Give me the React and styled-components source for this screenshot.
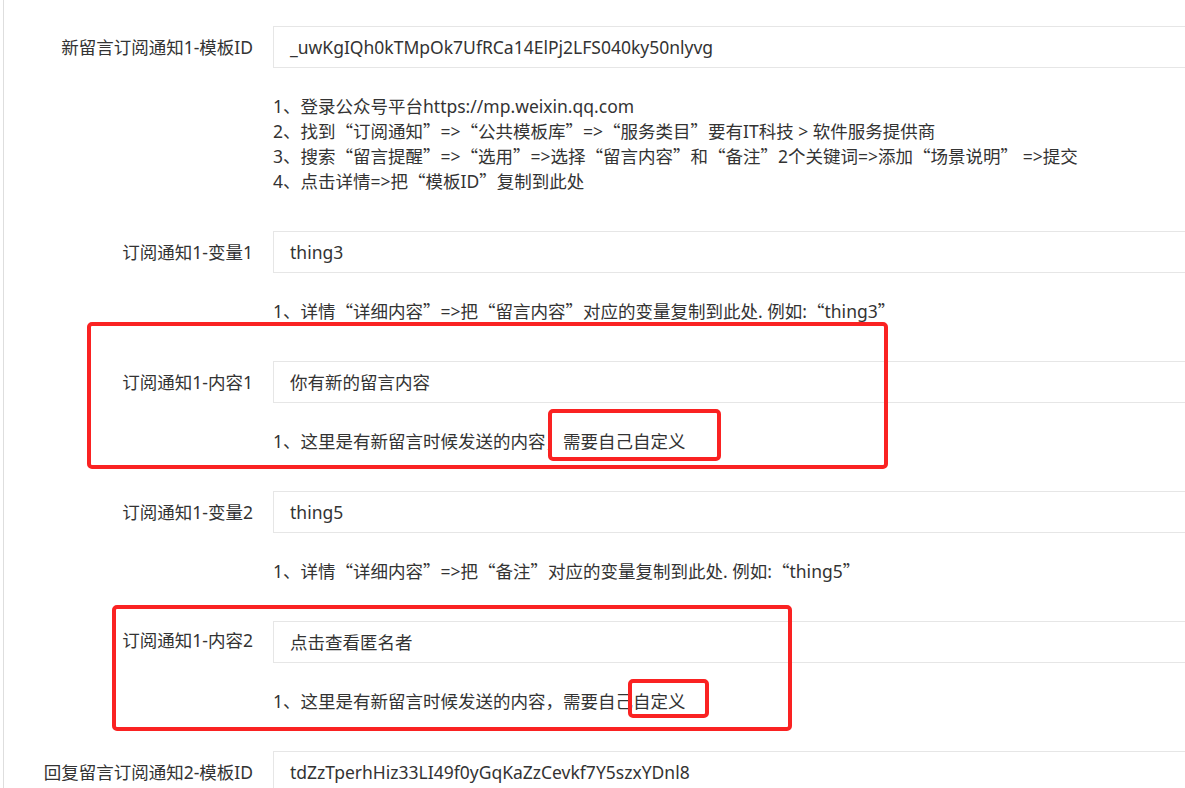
import React from 'react';
import styled, { createGlobalStyle } from 'styled-components';

const GlobalStyle = createGlobalStyle`
  html, body {
    margin: 0;
    padding: 0;
    background: #fff;
    overflow: hidden;
  }
  body {
    font-family: "Noto Sans", "Noto Sans CJK SC", sans-serif;
    color: #333;
  }
`;

const Page = styled.div`
  position: relative;
  margin-left: 3px;
  border-left: 1px solid #dedede;
  min-height: 788px;
  padding-top: 26px;
  box-sizing: border-box;
`;

const Form = styled.div`
  display: grid;
  grid-template-columns: 249px 1fr;
  column-gap: 20px;
`;

const Label = styled.div`
  text-align: right;
  font-size: 17.5px;
  line-height: 42px;
  height: 42px;
  white-space: nowrap;
  color: #333;
  margin-top: ${p => p.$shift || 0}px;
`;

const Field = styled.div`
  display: flex;
  flex-direction: column;
  min-width: 0;
`;

const Input = styled.div`
  width: 1200px;
  height: 42px;
  box-sizing: border-box;
  border: 1px solid #e6e6e6;
  padding-left: 16px;
  font-size: 17.5px;
  line-height: 40px;
  color: #333;
  white-space: nowrap;
`;

const Help = styled.div`
  margin-top: 26px;
  margin-bottom: 37px;
  font-size: 17.5px;
  color: #333;
  white-space: nowrap;
`;

const HelpLine = styled.div`
  height: 25px;
  line-height: 25px;
  overflow: visible;
`;

const Quote = styled.span`
  font-family: "Noto Sans CJK SC", sans-serif;
  line-height: 1;
`;

const Mark = styled.div`
  position: absolute;
  left: ${p => p.$x}px;
  top: ${p => p.$y}px;
  width: ${p => p.$w}px;
  height: ${p => p.$h}px;
  box-sizing: border-box;
  border: 4px solid #fa2222;
  border-radius: 5px;
  pointer-events: none;
`;

const rows = [
  {
    label: '新留言订阅通知1-模板ID',
    value: '_uwKgIQh0kTMpOk7UfRCa14ElPj2LFS040ky50nlyvg',
    help: [
      '1、登录公众号平台https://mp.weixin.qq.com',
      '2、找到“订阅通知”=>“公共模板库”=>“服务类目”要有IT科技 > 软件服务提供商',
      '3、搜索“留言提醒”=>“选用”=>选择“留言内容”和“备注”2个关键词=>添加“场景说明” =>提交',
      '4、点击详情=>把“模板ID”复制到此处',
    ],
  },
  {
    label: '订阅通知1-变量1',
    value: 'thing3',
    help: ['1、详情“详细内容”=>把“留言内容”对应的变量复制到此处. 例如:“thing3”'],
  },
  {
    label: '订阅通知1-内容1',
    value: '你有新的留言内容',
    help: ['1、这里是有新留言时候发送的内容，需要自己自定义'],
  },
  {
    label: '订阅通知1-变量2',
    value: 'thing5',
    help: ['1、详情“详细内容”=>把“备注”对应的变量复制到此处. 例如:“thing5”'],
  },
  {
    label: '订阅通知1-内容2',
    value: '点击查看匿名者',
    shift: -2,
    help: ['1、这里是有新留言时候发送的内容，需要自己自定义'],
  },
  {
    label: '回复留言订阅通知2-模板ID',
    value: 'tdZzTperhHiz33LI49f0yGqKaZzCevkf7Y5szxYDnl8',
    help: [],
  },
];

// page coordinates minus the 4px left offset of Page
const marks = [
  { x: 83, y: 322, w: 801, h: 147 },
  { x: 544, y: 409, w: 173, h: 52 },
  { x: 108, y: 605, w: 680, h: 126 },
  { x: 624, y: 679, w: 81, h: 39 },
];

// curly quotes are drawn with the CJK font so they take a full-width cell
const withQuotes = line =>
  line.split(/([“”])/).map((part, i) =>
    part === '“' || part === '”' ? <Quote key={i}>{part}</Quote> : part
  );

export default function App() {
  return (
    <>
      <GlobalStyle />
      <Page>
        <Form>
          {rows.map(r => (
            <React.Fragment key={r.label}>
              <Label $shift={r.shift}>{r.label}</Label>
              <Field>
                <Input>{r.value}</Input>
                {r.help.length > 0 && (
                  <Help>
                    {r.help.map(line => (
                      <HelpLine key={line}>{withQuotes(line)}</HelpLine>
                    ))}
                  </Help>
                )}
              </Field>
            </React.Fragment>
          ))}
        </Form>
        {marks.map((m, i) => (
          <Mark key={i} $x={m.x} $y={m.y} $w={m.w} $h={m.h} />
        ))}
      </Page>
    </>
  );
}
